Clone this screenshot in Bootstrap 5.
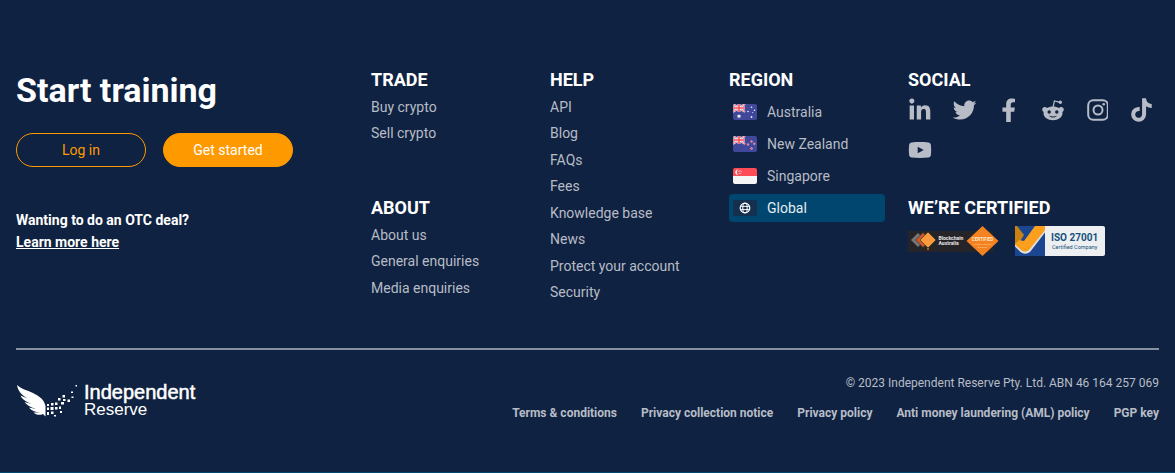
<!DOCTYPE html>
<html lang="en">
<head>
<meta charset="utf-8">
<meta name="viewport" content="width=device-width, initial-scale=1">
<title>Independent Reserve</title>
<link href="https://cdn.jsdelivr.net/npm/bootstrap@5.3.0/dist/css/bootstrap.min.css" rel="stylesheet">
<style>
  :root { --navy: #0f2241; --soft: #b7bcc6; --orange: #ff9900; --teal: #00466e; }
  body { background: var(--navy); color: #fff; font-family: Roboto, "Liberation Sans", sans-serif; font-size: 14px; line-height: 22px; }
  a { color: var(--soft); text-decoration: none; }
  a:hover { color: #fff; }
  .site-footer { padding: 68px 16px 50px; border-bottom: 1px solid var(--teal); }
  .footer-grid { display: grid; grid-template-columns: 355fr 179fr 179fr 179fr 251fr; }
  .cta-title { font-size: 34px; line-height: 44px; font-weight: 700; margin-bottom: 21px; }
  .cta-row { gap: 17px; }
  .btn-pill { width: 130px; height: 34px; padding: 0; border-radius: 17px; font-size: 14px; border: 1px solid var(--orange); color: var(--orange); }
  .btn-pill.filled, .btn-pill:hover { background: var(--orange); color: #fff; border-color: var(--orange); }
  .otc { margin-top: 42px; font-weight: 700; }
  .otc a { color: #fff; text-decoration: underline; }
  .group-title { font-size: 18px; line-height: 24px; font-weight: 700; margin: 0 0 2px; }
  .upper-group { min-height: 128px; }
  .link-list li { line-height: 26px; }
  .link-list li:nth-child(even) { margin-bottom: 1px; }
  .region { height: 28px; padding: 0 4px; gap: 10px; width: 156px; border-radius: 4px; margin-bottom: 4px; }
  .region.active { background: var(--teal); color: #e6edf2; }
  .region-list { padding-top: 4px; }
  .social-list { gap: 16px 20px; padding-top: 4px; }
  .social-list svg { display: block; fill: var(--soft); }
  .cert-list { gap: 16px; padding-top: 4px; }
  .cert-list svg { display: block; }
  .rule { border: 0; border-top: 2px solid #8790a0; opacity: 1; margin: 42px 0 0; }
  .legal { font-size: 12px; line-height: 18px; color: var(--soft); padding-top: 24px; }
  .legal-links { gap: 12px 24px; font-weight: 700; margin-top: 12px; }
  .brand { padding-top: 34px; gap: 6px; color: #fff; font-family: "Liberation Sans", sans-serif; }
  .brand-first { font-size: 20px; line-height: 16px; -webkit-text-stroke: 0.5px #fff; }
  .brand-second { font-size: 17px; line-height: 20px; }
</style>
</head>
<body>
<footer class="site-footer">
  <div class="footer-grid">
    <section>
      <h2 class="cta-title">Start training</h2>
      <div class="cta-row d-flex flex-wrap">
        <button type="button" class="btn btn-pill">Log in</button>
        <button type="button" class="btn btn-pill filled">Get started</button>
      </div>
      <div class="otc">Wanting to do an OTC deal?<br><a href="#">Learn more here</a></div>
    </section>

    <div>
      <nav class="upper-group" aria-label="Trade">
        <h3 class="group-title">TRADE</h3>
        <ul class="list-unstyled link-list mb-0">
          <li><a href="#">Buy crypto</a></li>
          <li><a href="#">Sell crypto</a></li>
        </ul>
      </nav>
      <nav aria-label="About">
        <h3 class="group-title">ABOUT</h3>
        <ul class="list-unstyled link-list mb-0">
          <li><a href="#">About us</a></li>
          <li><a href="#">General enquiries</a></li>
          <li><a href="#">Media enquiries</a></li>
        </ul>
      </nav>
    </div>

    <nav aria-label="Help">
      <h3 class="group-title">HELP</h3>
      <ul class="list-unstyled link-list mb-0">
        <li><a href="#">API</a></li>
        <li><a href="#">Blog</a></li>
        <li><a href="#">FAQs</a></li>
        <li><a href="#">Fees</a></li>
        <li><a href="#">Knowledge base</a></li>
        <li><a href="#">News</a></li>
        <li><a href="#">Protect your account</a></li>
        <li><a href="#">Security</a></li>
      </ul>
    </nav>

    <nav aria-label="Region">
      <h3 class="group-title">REGION</h3>
      <svg width="0" height="0" class="position-absolute" aria-hidden="true">
        <defs>
          <clipPath id="flagClip"><rect width="24" height="16" rx="2"/></clipPath>
          <g id="ensign">
            <rect width="24" height="16" rx="2" fill="#41479b"/>
            <g clip-path="url(#flagClip)">
              <path d="M0 0L12 8M12 0L0 8" stroke="#f5f5f5" stroke-width="2"/>
              <path d="M0 0L12 8M12 0L0 8" stroke="#ff4b55" stroke-width=".8"/>
              <path d="M6 0V8M0 4H12" stroke="#f5f5f5" stroke-width="2.8"/>
              <path d="M6 0V8M0 4H12" stroke="#ff4b55" stroke-width="1.6"/>
            </g>
          </g>
        </defs>
      </svg>
      <div class="region-list">
        <a href="#" class="region d-flex align-items-center">
          <svg width="24" height="16" aria-hidden="true"><use href="#ensign"/><g fill="#f5f5f5"><path d="M6 10l.6 1.3 1.4-.2-.8 1.1.8 1.1-1.4-.1L6 14.500l-.6-1.300-1.400.1.8-1.100-.8-1.100 1.400.2z"/><circle cx="18.500" cy="3.300" r=".8"/><circle cx="15" cy="7.500" r=".8"/><circle cx="21.500" cy="6.200" r=".8"/><circle cx="18.500" cy="13" r=".9"/><circle cx="19.700" cy="8.500" r=".5"/></g></svg>
          Australia</a>
        <a href="#" class="region d-flex align-items-center">
          <svg width="24" height="16" aria-hidden="true"><use href="#ensign"/><g fill="#ff4b55" stroke="#f5f5f5" stroke-width=".4"><circle cx="18.500" cy="5.500" r=".9"/><circle cx="15" cy="8.500" r=".9"/><circle cx="21.300" cy="7.700" r=".9"/><circle cx="18.500" cy="12.500" r="1"/></g></svg>
          New Zealand</a>
        <a href="#" class="region d-flex align-items-center">
          <svg width="24" height="16" aria-hidden="true"><g clip-path="url(#flagClip)"><rect width="24" height="8" fill="#ff4b55"/><rect y="8" width="24" height="8" fill="#f5f5f5"/></g><path d="M5.300 1.600a2.600 2.600 0 1 0 0 5.100a3 3 0 0 1 0-5.100z" fill="#f5f5f5"/><g fill="#f5f5f5"><circle cx="7" cy="2.500" r=".5"/><circle cx="5.900" cy="3.600" r=".5"/><circle cx="8.200" cy="3.600" r=".5"/><circle cx="6.300" cy="5.200" r=".5"/><circle cx="7.800" cy="5.200" r=".5"/></g></svg>
          Singapore</a>
        <a href="#" class="region active d-flex align-items-center mb-0" aria-current="true">
          <svg width="24" height="16" aria-hidden="true"><rect width="24" height="16" rx="2" fill="#15304f"/><g fill="none" stroke="#fff"><circle cx="12" cy="8" r="4.800" stroke-width="1.200"/><ellipse cx="12" cy="8" rx="2.200" ry="4.800"/><path d="M7.500 6.400h9M7.500 9.600h9" stroke-width=".9"/></g></svg>
          Global</a>
      </div>
    </nav>

    <div>
      <section class="upper-group">
        <h3 class="group-title">SOCIAL</h3>
        <div class="social-list d-flex flex-wrap">
          <a href="#" aria-label="LinkedIn"><svg width="24" height="24" viewBox="-28 -12 512 512"><path d="M100.280 448H7.400V148.900h92.880zM53.790 108.100C24.090 108.100 0 83.500 0 53.800a53.790 53.790 0 0 1 107.580 0c0 29.700-24.100 54.300-53.790 54.300zM447.900 448h-92.680V302.400c0-34.700-.7-79.200-48.290-79.200-48.290 0-55.690 37.700-55.690 76.700V448h-92.780V148.900h89.080v40.800h1.300c12.400-23.500 42.690-48.300 87.880-48.300 94 0 111.280 61.900 111.280 142.300V448z"/></svg></a>
          <a href="#" aria-label="Twitter"><svg width="24" height="24" viewBox="-16 -4 520 520"><path d="M459.370 151.716c.325 4.548.325 9.097.325 13.645 0 138.720-105.583 298.558-298.558 298.558-59.452 0-114.680-17.219-161.137-47.106 8.447.974 16.568 1.299 25.340 1.299 49.055 0 94.213-16.568 130.274-44.832-46.132-.975-84.792-31.188-98.112-72.772 6.498.974 12.995 1.624 19.818 1.624 9.421 0 18.843-1.300 27.614-3.573-48.081-9.747-84.143-51.980-84.143-102.985v-1.299c13.969 7.797 30.214 12.670 47.431 13.319-28.264-18.843-46.781-51.005-46.781-87.391 0-19.492 5.197-37.360 14.294-52.954 51.655 63.675 129.300 105.258 216.365 109.807-1.624-7.797-2.599-15.918-2.599-24.040 0-57.828 46.782-104.934 104.934-104.934 30.213 0 57.502 12.670 76.670 33.137 23.715-4.548 46.456-13.320 66.599-25.340-7.798 24.366-24.366 44.833-46.132 57.827 21.117-2.273 41.584-8.122 60.426-16.243-14.292 20.791-32.161 39.308-52.628 54.253z"/></svg></a>
          <a href="#" aria-label="Facebook"><svg width="24" height="24" viewBox="-112 -10 512 524"><path d="M279.140 288l14.220-92.660h-88.910v-60.130c0-25.350 12.420-50.060 52.240-50.060h40.420V6.260S260.430 0 225.360 0c-73.220 0-121.080 44.380-121.080 124.720v70.620H22.890V288h81.390v224h100.170V288z"/></svg></a>
          <a href="#" aria-label="Reddit"><svg width="24" height="24" viewBox="-1 0 24 24"><path fill-rule="evenodd" d="M12 8.500c2.400 0 4.500.6 6.100 1.600a2.600 2.600 0 1 1 3.200 3.900c.1.400.2.800.2 1.200 0 3.900-4.300 7-9.500 7s-9.500-3.100-9.500-7c0-.4.1-.8.2-1.200a2.600 2.600 0 1 1 3.200-3.900c1.600-1 3.700-1.600 6.100-1.600zM8.200 12.300a1.700 1.700 0 1 0 0 3.400a1.700 1.700 0 0 0 0-3.400zM15.800 12.300a1.700 1.700 0 1 0 0 3.400a1.700 1.700 0 0 0 0-3.400zM8 17.500c.9 1.400 2.300 2 4 2s3.100-.6 4-2c-1.300.7-2.600 1-4 1s-2.700-.3-4-1z"/><path d="M12.100 9L13.400 3l4.600 1.100" fill="none" stroke="#b7bcc6" stroke-width="1.200"/><circle cx="19.300" cy="4.300" r="1.700"/></svg></a>
          <a href="#" aria-label="Instagram"><svg width="24" height="24" viewBox="-2 0 24 24"><rect x="2.200" y="2.200" width="19.600" height="19.600" rx="5" fill="none" stroke="#b7bcc6" stroke-width="2"/><circle cx="12" cy="12" r="4.500" fill="none" stroke="#b7bcc6" stroke-width="2"/><circle cx="17.700" cy="6.300" r="1.300"/></svg></a>
          <a href="#" aria-label="TikTok"><svg width="24" height="24" viewBox="-64 -8 512 524"><path d="M448,209.910a210.060,210.060,0,0,1-122.770-39.250V349.380A162.550,162.550,0,1,1,185,188.310V278.200a74.620,74.620,0,1,0,52.230,71.180V0l88,0a121.180,121.180,0,0,0,1.860,22.170h0A122.180,122.180,0,0,0,381,102.390a121.430,121.430,0,0,0,67,20.140Z"/></svg></a>
          <a href="#" aria-label="YouTube"><svg width="24" height="24" viewBox="0 0 24 24"><path fill-rule="evenodd" d="M12 4c3 0 6 .1 8.300.4 1.500.2 2.400 1.100 2.600 2.600.4 3.300.4 6.700 0 10-.2 1.500-1.100 2.400-2.600 2.600-5.500.5-11.100.5-16.600 0-1.500-.2-2.400-1.100-2.600-2.600-.4-3.300-.4-6.700 0-10 .2-1.500 1.100-2.400 2.600-2.600C6 4.100 9 4 12 4zM9.700 8.700v6.600l6-3.300z"/></svg></a>
        </div>
      </section>
      <section>
        <h3 class="group-title">WE’RE CERTIFIED</h3>
        <div class="cert-list d-flex flex-wrap">
          <svg width="91" height="30" viewBox="0 0 91 30" role="img" aria-label="Blockchain Australia Certified">
            <rect y="5" width="85" height="21" fill="#252529"/>
            <path d="M10 7l7 7-7 7-7-7z" fill="#77777b"/>
            <path d="M15 6.500l7.500 7.500-7.500 7.500L7.500 14z" fill="#c65a2a" stroke="#252529" stroke-width=".6"/>
            <path d="M20 6l8 8-8 8-8-8z" fill="#f99b3c" stroke="#252529" stroke-width=".6"/>
            <circle cx="20" cy="23" r="1" fill="#c87818"/>
            <text x="30.500" y="14" font-size="5" font-weight="700" fill="#e8e8e8" font-family="Roboto">Blockchain</text>
            <text x="30.500" y="18.500" font-size="5" font-weight="700" fill="#e8e8e8" font-family="Roboto">Australia</text>
            <path d="M74.500 0L90.500 15 74.500 30 58.500 15z" fill="#f58220"/>
            <text x="74.500" y="15" font-size="4.500" font-weight="700" text-anchor="middle" fill="#ffe6cc" font-family="Roboto">CERTIFIED</text>
            <g font-size="2" text-anchor="middle" fill="#ffd2a5" font-family="Roboto"><text x="74.500" y="18.500">DIGITAL CURRENCY</text><text x="74.500" y="21.500">BUSINESS</text></g>
          </svg>
          <svg width="90" height="30" viewBox="0 0 90 30" role="img" aria-label="ISO 27001 Certified Company">
            <rect width="90" height="30" rx="2" fill="#eeeff1"/>
            <rect width="30" height="30" fill="#1c4690"/>
            <path d="M0 0h2l7 9-5 8-4 2z" fill="#c98212"/>
            <path d="M0 18L4 14l5 1L20 0h10v5L14 25q-4 3-8 0L0 19z" fill="#fc9f1c"/>
            <path d="M0 18.500L6 24q4 3 8 0L30 4v2.500L15 26q-5 3.500-9.500 0L0 20.500z" fill="#dce2e8"/>
            <text x="36" y="14.500" font-size="10" font-weight="700" fill="#14527c" font-family="Roboto">ISO 27001</text>
            <text x="37" y="23" font-size="5.500" fill="#14527c" font-family="Roboto">Certified Company</text>
          </svg>
        </div>
      </section>
    </div>
  </div>

  <hr class="rule">

  <div class="d-flex justify-content-between align-items-start">
    <a href="#" class="brand d-flex" aria-label="Independent Reserve">
      <svg width="62" height="34" viewBox="0 0 62 34" fill="#fff" aria-hidden="true">
        <path d="M1 1C5 5 11 6 17 9C23 12 27 15 28.500 19L29.500 22V32.500L27 30C24 31.500 20 31 17.500 28.500L24 28.500C19 28 15 26.500 13 23.500L20 25C14 23 10 20.500 8.500 18L15.500 20C9 17 6 15 4.500 11.500L11.500 14.500C5 10.500 2 7 1 1z"/>
        <path d="M31 20h2v2h-2zM35 19h2.500v2.500H35zM39 18.500h2.500V21H39zM31 23.500h2V26h-2zM34.500 23h3v3h-3zM39 23h2.500v2.500H39zM31 28h2v3h-2zM35 27.500h2.500V30H35zM38 31h2v1.500h-2zM42 14h2.500v2.500H42zM45 18h3v2.500h-3zM43 22.500h2V25h-2zM44 27h2v2h-2zM46.500 11h2.500v2.500h-2.500zM47 15h2.500v2H47zM51.500 15.500H54V18h-2.500zM55 7.500h2V9h-2zM55.500 12.500h2v1.500h-2zM59.500 1H61v1.500h-1.500z"/>
      </svg>
      <span class="d-flex flex-column"><span class="brand-first">Independent</span><span class="brand-second">Reserve</span></span>
    </a>
    <div class="legal text-end">
      <div>© 2023 Independent Reserve Pty. Ltd. ABN 46 164 257 069</div>
      <div class="legal-links d-flex flex-wrap justify-content-end">
        <a href="#">Terms &amp; conditions</a>
        <a href="#">Privacy collection notice</a>
        <a href="#">Privacy policy</a>
        <a href="#">Anti money laundering (AML) policy</a>
        <a href="#">PGP key</a>
      </div>
    </div>
  </div>
</footer>
<script src="https://cdn.jsdelivr.net/npm/bootstrap@5.3.0/dist/js/bootstrap.bundle.min.js"></script>
</body>
</html>
